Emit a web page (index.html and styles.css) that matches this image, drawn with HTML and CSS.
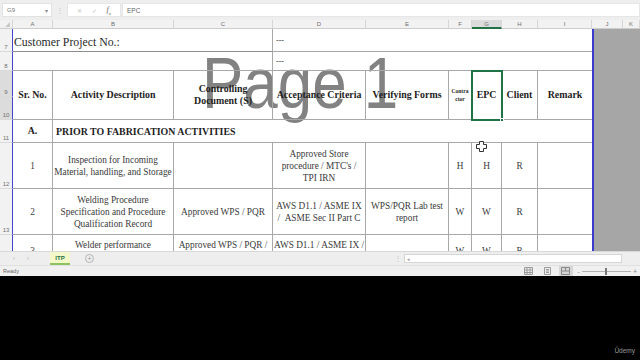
FILE: index.html
```html
<!DOCTYPE html>
<html lang="en">
<head>
    <meta charset="UTF-8">
    <meta name="viewport" content="width=device-width, initial-scale=1.0">
    <title>ITP - Excel</title>
    <link rel="stylesheet" href="styles.css">
</head>
<body>
    <div class="excel">
        <div class="formula-bar">
            <div class="name-box">G9<span class="drop">&#9662;</span></div>
            <div class="bar-sep">&#8942;</div>
            <div class="fx-buttons">
                <span class="fx-btn">&#10005;</span>
                <span class="fx-btn">&#10003;</span>
                <span class="fx-btn fx">f<sub>x</sub></span>
            </div>
            <div class="formula-input">EPC</div>
        </div>

        <div class="sheet">
            <div class="page-label">Page 1</div>

            <div class="grid">
                <!-- column headers -->
                <div class="ch corner"><span class="tri"></span></div>
                <div class="ch">A</div>
                <div class="ch">B</div>
                <div class="ch">C</div>
                <div class="ch">D</div>
                <div class="ch">E</div>
                <div class="ch">F</div>
                <div class="ch ch-sel">G</div>
                <div class="ch">H</div>
                <div class="ch">I</div>
                <div class="ch">J</div>
                <div class="ch">K</div>

                <!-- row 7 -->
                <div class="rh">7</div>
                <div class="cell span-3 big left">Customer Project No.:</div>
                <div class="cell span-6 left dash no-right">---</div>
                <div class="out page-edge"></div>
                <div class="out"></div>

                <!-- row 8 -->
                <div class="rh">8</div>
                <div class="cell span-3"></div>
                <div class="cell span-6 left dash no-right">---</div>
                <div class="out page-edge"></div>
                <div class="out"></div>

                <!-- rows 9-10 -->
                <div class="rh rh-sel">9</div>
                <div class="cell head tall">Sr. No.</div>
                <div class="cell head tall">Activity Description</div>
                <div class="cell head tall">Controlling<br>Document (S)</div>
                <div class="cell head tall">Acceptance Criteria</div>
                <div class="cell head tall">Verifying Forms</div>
                <div class="cell head tall tiny">Contra<br>ctor</div>
                <div class="cell head tall">EPC</div>
                <div class="cell head tall">Client</div>
                <div class="cell head tall no-right">Remark</div>
                <div class="out page-edge tall"></div>
                <div class="out tall"></div>
                <div class="rh rh-sel">10</div>

                <!-- row 11 -->
                <div class="rh">11</div>
                <div class="cell head">A.</div>
                <div class="cell head span-8 left section no-right">PRIOR TO FABRICATION ACTIVITIES</div>
                <div class="out page-edge"></div>
                <div class="out"></div>

                <!-- row 12 -->
                <div class="rh">12</div>
                <div class="cell">1</div>
                <div class="cell">Inspection for Incoming<br>Material, handling, and Storage</div>
                <div class="cell"></div>
                <div class="cell">Approved Store<br>procedure / MTC's /<br>TPI IRN</div>
                <div class="cell"></div>
                <div class="cell">H</div>
                <div class="cell">H</div>
                <div class="cell">R</div>
                <div class="cell no-right"></div>
                <div class="out page-edge"></div>
                <div class="out"></div>

                <!-- row 13 -->
                <div class="rh">13</div>
                <div class="cell">2</div>
                <div class="cell">Welding Procedure<br>Specification and Procedure<br>Qualification Record</div>
                <div class="cell">Approved WPS / PQR</div>
                <div class="cell">AWS D1.1 / ASME IX<br>/ &nbsp;ASME Sec II Part C</div>
                <div class="cell">WPS/PQR Lab test<br>report</div>
                <div class="cell">W</div>
                <div class="cell">W</div>
                <div class="cell">R</div>
                <div class="cell no-right"></div>
                <div class="out page-edge"></div>
                <div class="out"></div>

                <!-- row 14 -->
                <div class="rh">14</div>
                <div class="cell">3</div>
                <div class="cell">Welder performance<br>Qualification</div>
                <div class="cell">Approved WPS / PQR /<br>WPQ</div>
                <div class="cell">AWS D1.1 / ASME IX /<br>ASME Sec II</div>
                <div class="cell"></div>
                <div class="cell">W</div>
                <div class="cell">W</div>
                <div class="cell">R</div>
                <div class="cell no-right"></div>
                <div class="out page-edge"></div>
                <div class="out"></div>
            </div>

            <div class="selection"><span class="handle"></span></div>

            <svg class="pointer" width="11" height="11" viewBox="0 0 11 11">
                <path d="M3.5 0.5h4v3h3v4h-3v3h-4v-3h-3v-4h3z" fill="#fff" stroke="#333" stroke-width="1"/>
            </svg>
        </div>

        <div class="tab-bar">
            <span class="tab-arrow first">&#8249;</span>
            <span class="tab-arrow">&#8250;</span>
            <div class="tab active">ITP</div>
            <span class="add-sheet">+</span>
            <span class="bar-sep tab-sep">&#8942;</span>
            <div class="hscroll"><span class="scroll-arrow">&#9666;</span></div>
        </div>

        <div class="status-bar">
            <span class="ready">Ready</span>
            <div class="views">
                <svg class="view-icon" width="9" height="8" viewBox="0 0 9 8">
                    <path d="M0.5 0.5h8v7h-8zM0.5 3h8M0.5 5.5h8M3 0.5v7M6 0.5v7" fill="none" stroke="#9a9a9a" stroke-width="1"/>
                </svg>
                <svg class="view-icon" width="9" height="8" viewBox="0 0 9 8">
                    <path d="M1.5 0.5h6v7h-6zM3 2.5h3M3 4h3M3 5.5h3" fill="none" stroke="#9a9a9a" stroke-width="1"/>
                </svg>
                <span class="view-active">
                    <svg class="view-icon" width="9" height="8" viewBox="0 0 9 8">
                        <path d="M0.5 0.5h8v7h-8zM0.5 4h8M4.5 0.5v3.5" fill="none" stroke="#8a8a8a" stroke-width="1"/>
                    </svg>
                </span>
            </div>
            <div class="zoom">
                <span class="zoom-sign">-</span>
                <div class="zoom-track"><span class="zoom-thumb"></span></div>
                <span class="zoom-sign">+</span>
            </div>
        </div>
    </div>

    <div class="udemy">Ûdemy</div>
</body>
</html>
```

FILE: styles.css
```css
* {
    margin: 0;
    padding: 0;
    box-sizing: border-box;
}

body {
    width: 640px;
    height: 360px;
    background: #000;
    font-family: 'Liberation Sans', Arial, sans-serif;
    overflow: hidden;
    position: relative;
}

.excel {
    width: 640px;
    height: 276px;
    background: #f0f0f0;
    display: flex;
    flex-direction: column;
}

/* formula bar */
.formula-bar {
    height: 20px;
    display: flex;
    align-items: center;
    padding: 3px 0 3px 2px;
    background: #eeeeee;
}

.name-box {
    width: 50px;
    height: 14px;
    background: #fff;
    border: 1px solid #e2e2e2;
    font-size: 6px;
    color: #777;
    display: flex;
    align-items: center;
    justify-content: space-between;
    padding: 0 3px 0 4px;
}

.drop {
    font-size: 6px;
    color: #888;
}

.bar-sep {
    width: 15px;
    text-align: center;
    font-size: 8px;
    color: #c4c4c4;
}

.fx-buttons {
    width: 54px;
    height: 14px;
    background: #fff;
    border: 1px solid #e6e6e6;
    display: flex;
    align-items: center;
    justify-content: space-around;
    padding: 0 4px;
}

.fx-btn {
    font-size: 6px;
    color: #c2c2c2;
}

.fx {
    font-family: 'Liberation Serif', serif;
    font-style: italic;
    font-size: 8px;
    color: #666;
}

.fx sub {
    font-size: 5px;
}

.formula-input {
    flex: 1;
    height: 14px;
    margin-left: 1px;
    background: #fff;
    border: 1px solid #e6e6e6;
    font-size: 6.5px;
    color: #666;
    display: flex;
    align-items: center;
    padding-left: 4px;
}

/* sheet */
.sheet {
    height: 231px;
    position: relative;
    overflow: hidden;
    background: #fff;
}

.grid {
    position: relative;
    z-index: 1;
    display: grid;
    grid-template-columns: 13px 40px 121px 99px 93px 83px 23px 30px 36px 54px 31px 17px;
    grid-template-rows: 9px 23px 19px 26px 23px 23px 46px 46px 32px;
}

.ch {
    background: #f2f2f2;
    border-right: 1px solid #d6d6d6;
    border-bottom: 1px solid #cdcdcd;
    font-size: 6px;
    color: #707070;
    display: flex;
    align-items: center;
    justify-content: center;
}

.ch-sel {
    background: #dcdcdc;
    border-bottom: 2px solid #217346;
}

.corner {
    position: relative;
}

.tri {
    position: absolute;
    right: 2px;
    bottom: 1px;
    border-left: 5px solid transparent;
    border-bottom: 5px solid #c8c8c8;
}

.rh {
    background: #f2f2f2;
    border-right: 1px solid #4646cc;
    border-bottom: 1px solid #dadada;
    font-size: 6px;
    color: #707070;
    display: flex;
    align-items: flex-end;
    justify-content: center;
    padding-bottom: 1px;
}

.rh-sel {
    background: #dcdcdc;
}

.cell {
    border-right: 1px solid #a8a8a8;
    border-bottom: 1px solid #a8a8a8;
    font-family: 'Liberation Serif', 'Times New Roman', serif;
    font-size: 9.3px;
    line-height: 12px;
    color: #3a3a3a;
    display: flex;
    align-items: center;
    justify-content: center;
    text-align: center;
    white-space: nowrap;
    overflow: hidden;
}

.span-3 { grid-column: span 3; }
.span-6 { grid-column: span 6; }
.span-8 { grid-column: span 8; }
.tall { grid-row: span 2; }

.no-right {
    border-right: none;
}

.left {
    justify-content: flex-start;
    padding-left: 3px;
}

.big {
    font-size: 11.8px;
    color: #2a2a2a;
    padding-left: 1px;
    padding-top: 3px;
    border-bottom-color: #8e8e8e;
}

.dash {
    font-size: 8px;
    color: #333;
    padding-top: 2px;
}

.head {
    font-weight: bold;
    font-size: 9.9px;
    color: #1e1e1e;
}

.tiny {
    font-size: 5.5px;
    line-height: 8px;
}

.section {
    padding-left: 3px;
    padding-top: 1px;
}

.out {
    background: #a6a6a6;
}

.page-edge {
    border-left: 2px solid #3a3acb;
}

.page-label {
    position: absolute;
    left: 202px;
    top: 27px;
    z-index: 0;
    font-size: 72px;
    line-height: 72px;
    color: #828282;
    transform: scaleX(0.86);
    transform-origin: left top;
    white-space: nowrap;
}

.selection {
    position: absolute;
    left: 471px;
    top: 50px;
    width: 32px;
    height: 51px;
    z-index: 2;
    border: 2px solid #217346;
}

.handle {
    position: absolute;
    right: -3px;
    bottom: -3px;
    width: 4px;
    height: 4px;
    background: #217346;
    border: 1px solid #fff;
}

.pointer {
    position: absolute;
    left: 476px;
    top: 121px;
    z-index: 3;
}

/* sheet tabs */
.tab-bar {
    height: 14px;
    display: flex;
    align-items: center;
    background: #eeeeee;
    border-top: 1px solid #d8d8d8;
}

.tab-arrow {
    width: 14px;
    text-align: center;
    font-size: 7px;
    color: #c0c0c0;
}

.tab-arrow.first {
    margin-left: 7px;
}

.tab {
    margin-left: 15px;
    width: 20px;
    height: 13px;
    align-self: flex-start;
    font-size: 6px;
    font-weight: bold;
    color: #217346;
    background: #f4f7c8;
    border-bottom: 2px solid #8dc261;
    display: flex;
    align-items: center;
    justify-content: center;
}

.add-sheet {
    margin-left: 15px;
    width: 9px;
    height: 9px;
    border: 1px solid #b4b4b4;
    border-radius: 50%;
    font-size: 7px;
    line-height: 7px;
    text-align: center;
    color: #999;
}

.tab-sep {
    margin-left: 298px;
    width: 12px;
}

.hscroll {
    width: 218px;
    height: 9px;
    background: #fff;
    border: 1px solid #d6d6d6;
    display: flex;
    align-items: center;
    padding-left: 2px;
}

.scroll-arrow {
    font-size: 5px;
    color: #999;
}

/* status bar */
.status-bar {
    height: 11px;
    display: flex;
    align-items: center;
    background: #f0f0f0;
    border-top: 1px solid #e0e0e0;
}

.ready {
    margin-left: 3px;
    font-size: 5.5px;
    color: #666;
}

.views {
    margin-left: auto;
    display: flex;
    align-items: center;
    gap: 10px;
}

.view-icon {
    display: block;
}

.view-active {
    width: 14px;
    height: 10px;
    background: #d6d6d6;
    display: flex;
    align-items: center;
    justify-content: center;
    margin-left: -3px;
}

.zoom {
    display: flex;
    align-items: center;
    margin-left: 5px;
    margin-right: 3px;
    gap: 2px;
}

.zoom-sign {
    font-size: 7px;
    color: #888;
}

.zoom-track {
    width: 49px;
    height: 1px;
    background: #b0b0b0;
    position: relative;
}

.zoom-thumb {
    position: absolute;
    left: 23px;
    top: -3px;
    width: 2px;
    height: 7px;
    background: #777;
}

.udemy {
    position: absolute;
    right: 5px;
    bottom: 6px;
    font-size: 6.5px;
    color: #9a9a9a;
}
```
